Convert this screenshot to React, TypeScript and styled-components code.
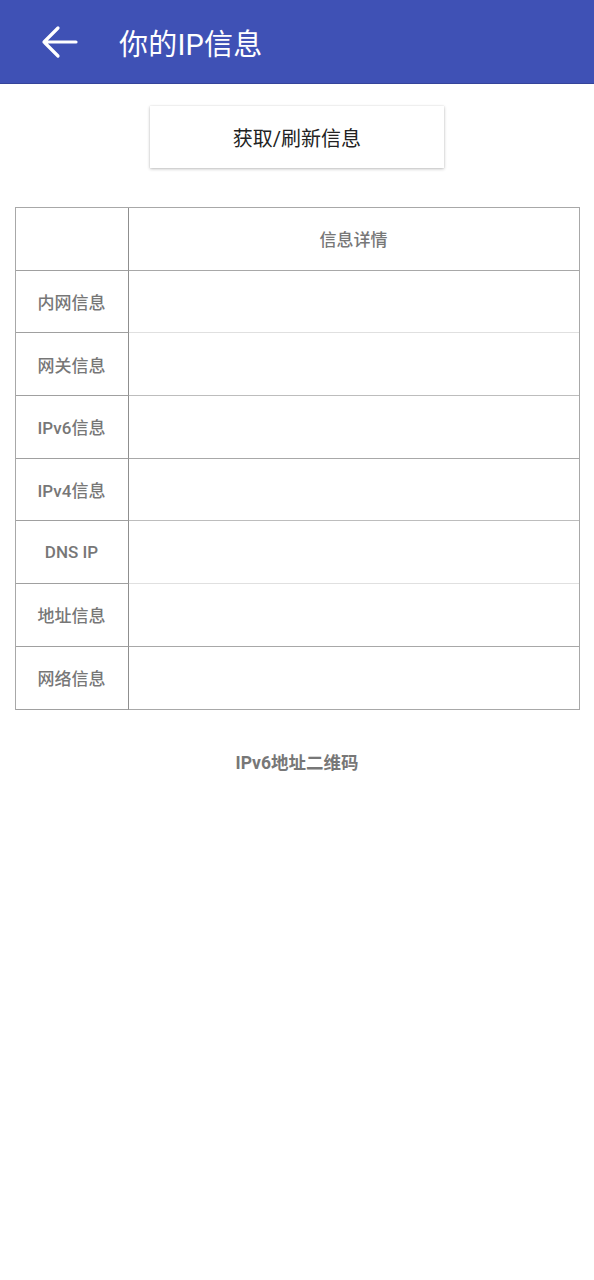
import { Fragment } from "react";
import styled, { createGlobalStyle } from "styled-components";

const GlobalStyle = createGlobalStyle`
  html, body {
    margin: 0;
    padding: 0;
    background: #fff;
    font-family: Roboto, "Noto Sans CJK SC", sans-serif;
  }
`;

const rows = [
  { label: "内网信息", line: "#e0e0e0" },
  { label: "网关信息", line: "#bdbdbd" },
  { label: "IPv6信息", line: "#a8a8a8" },
  { label: "IPv4信息", line: "#bdbdbd" },
  { label: "DNS IP", line: "#e0e0e0" },
  { label: "地址信息", line: "#a8a8a8" },
  { label: "网络信息", line: "#a8a8a8" },
];

const Page = styled.div`
  width: 594px;
  min-height: 1280px;
  display: flex;
  flex-direction: column;
  align-items: center;
`;

const AppBar = styled.header`
  width: 100%;
  height: 84px;
  box-sizing: border-box;
  background: #3f51b5;
  border-bottom: 1px solid #35449a;
  display: flex;
  align-items: center;
  padding-left: 38px;
  gap: 39px;
`;

const BackButton = styled.div`
  width: 42px;
  height: 42px;
  display: flex;
  align-items: center;
  justify-content: center;
`;

const Title = styled.h1`
  margin: 0;
  color: #fff;
  font-size: 29px;
  font-weight: 400;
  letter-spacing: 0.2px;
`;

const RefreshButton = styled.button`
  margin-top: 22px;
  width: 294px;
  height: 62px;
  background: #fff;
  border: none;
  box-shadow: 0 1px 3px rgba(0, 0, 0, 0.25), 0 0 1px rgba(0, 0, 0, 0.12);
  font-family: inherit;
  font-size: 20px;
  color: #222;
`;

const Table = styled.div`
  margin-top: 39px;
  width: 563px;
  display: grid;
  grid-template-columns: 113px 1fr;
  border-top: 1px solid #a8a8a8;
  border-left: 1px solid #a8a8a8;
  border-right: 1px solid #a8a8a8;
`;

const LabelCell = styled.div`
  height: 62.7px;
  box-sizing: border-box;
  border-right: 1px solid #8f8f8f;
  border-bottom: 1px solid #a0a0a0;
  display: flex;
  align-items: center;
  justify-content: center;
  color: #777;
  font-size: 17px;
  font-weight: 500;
`;

const DetailCell = styled.div<{ $line: string }>`
  height: 62.7px;
  box-sizing: border-box;
  border-bottom: 1px solid ${({ $line }) => $line};
  display: flex;
  align-items: center;
  justify-content: center;
  color: #777;
  font-size: 17px;
  font-weight: 500;
`;

const Caption = styled.div`
  margin-top: 39px;
  color: #777;
  font-size: 17.5px;
  font-weight: 700;
`;

export default function App() {
  return (
    <>
      <GlobalStyle />
      <Page>
        <AppBar>
          <BackButton>
            <svg width="38" height="34" viewBox="0 0 38 34" fill="none">
              <path
                d="M36 17H4M18 3L4 17l14 14"
                stroke="#fff"
                strokeWidth="3.2"
                strokeLinecap="round"
                strokeLinejoin="round"
              />
            </svg>
          </BackButton>
          <Title>你的IP信息</Title>
        </AppBar>
        <RefreshButton>获取/刷新信息</RefreshButton>
        <Table>
          <LabelCell />
          <DetailCell $line="#a8a8a8">信息详情</DetailCell>
          {rows.map((r) => (
            <Fragment key={r.label}>
              <LabelCell>{r.label}</LabelCell>
              <DetailCell $line={r.line} />
            </Fragment>
          ))}
        </Table>
        <Caption>IPv6地址二维码</Caption>
      </Page>
    </>
  );
}
